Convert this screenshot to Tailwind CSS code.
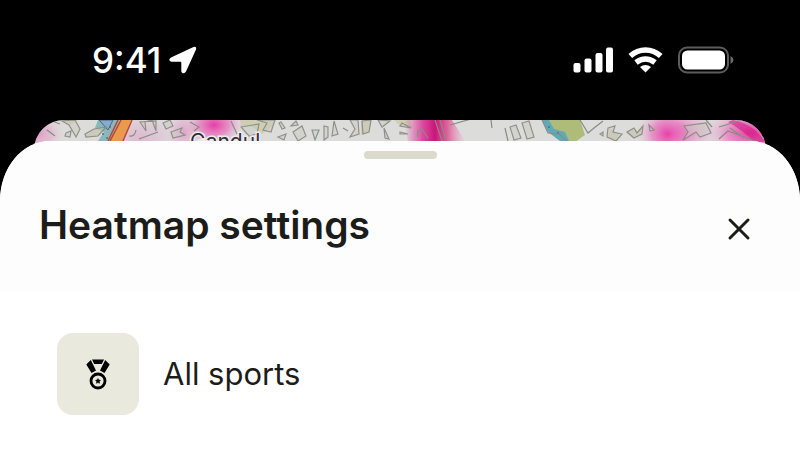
<!DOCTYPE html>
<html lang="en">

<head>
  <meta charset="UTF-8" />
  <meta name="viewport" content="width=device-width, initial-scale=1.0" />
  <title>Heatmap settings</title>
  <script src="https://cdn.jsdelivr.net/npm/@tailwindcss/browser@4"></script>
</head>

<body class="bg-black font-['Inter',sans-serif] text-[#1c1c1a] min-h-screen flex flex-col overflow-hidden">
  <!-- Status bar -->
  <header class="h-30 shrink-0 flex items-center justify-between pl-[92px] pr-[66px] text-white">
    <div class="flex items-center gap-2">
      <span class="text-[35px] leading-10 font-medium">9:41</span>
      <svg class="w-7 h-7" viewBox="0 0 28 28" fill="currentColor" aria-label="Location">
        <path d="M24.500 1Q28 .2 27 3.500L17 25.500Q15.500 28 13.500 27Q12.300 26.500 12.300 25V16.800Q12.300 15.800 11.300 15.800H2.500Q.2 15.500 .3 13.600Q.5 12.300 2 11.400Z" />
      </svg>
    </div>
    <div class="flex items-center gap-[15px]">
      <svg class="w-10 h-[26px]" viewBox="0 0 40 26" fill="currentColor" aria-label="Signal">
        <rect x="0.500" y="16" width="7" height="9.500" rx="2" />
        <rect x="11.500" y="11.500" width="7" height="14" rx="2" />
        <rect x="22.500" y="6" width="7" height="19.500" rx="2" />
        <rect x="33" y="0.500" width="7" height="25" rx="2" />
      </svg>
      <svg class="w-[35px] h-[26px]" viewBox="0 0 35 26" aria-label="Wi-Fi">
        <path d="M2.300 9Q9 3 17.500 3T32.700 9" fill="none" stroke="currentColor" stroke-width="5.400" />
        <path d="M8 15.500Q12.500 12 17.500 12T27 15.500" fill="none" stroke="currentColor" stroke-width="5.400" />
        <path d="M17.500 25.500L12 20Q17.500 16 23 20Z" fill="currentColor" />
      </svg>
      <svg class="w-14 h-[28px]" viewBox="0 0 56 28" aria-label="Battery">
        <rect x="1" y="1.500" width="49" height="25" rx="8" fill="none" stroke="#5c5c5c" stroke-width="2" />
        <rect x="4" y="4.500" width="43" height="19" rx="5.500" fill="currentColor" />
        <path d="M52.500 10Q55.500 11.500 55.500 14T52.500 18Z" fill="#6b6b6b" />
      </svg>
    </div>
  </header>

  <!-- Map peeking out behind the sheet -->
  <div class="h-[21px] shrink-0 px-[34px]">
    <div class="h-12 rounded-t-[30px] overflow-hidden bg-[#dcdcdb]">
      <svg class="w-full h-full" viewBox="34 120 732 48" preserveAspectRatio="xMidYMin slice">
        <defs>
          <radialGradient id="heat">
            <stop offset="0" stop-color="#e8209c" stop-opacity=".85" />
            <stop offset=".5" stop-color="#ec55b4" stop-opacity=".55" />
            <stop offset="1" stop-color="#f4b9dc" stop-opacity="0" />
          </radialGradient>
          <linearGradient id="heat-band">
            <stop offset="0" stop-color="#e52c9b" stop-opacity="0" />
            <stop offset=".3" stop-color="#dc2590" stop-opacity=".8" />
            <stop offset=".5" stop-color="#cb1479" />
            <stop offset=".7" stop-color="#d9508f" stop-opacity=".85" />
            <stop offset="1" stop-color="#f08cc5" stop-opacity="0" />
          </linearGradient>
        </defs>
        <!-- land and water -->
        <path d="M63 120H78L70 125ZM85 134L94 129L106 127L98 136L86 137ZM240 120H276L272 127L262 134L251 126H241ZM361 121L372 120L369 132L361 135ZM394 120H410L412 128L400 126Z" fill="#cfcdb4" />
        <path d="M542 120H580L585 135L575 142H562L550 129Z" fill="#aebb79" />
        <path d="M626 132L633 128L638 131L642 127V134L633 138ZM610 129L619 134L616 141L607 138Z" fill="#cdcab5" />
        <path d="M98 120H120L112 141H98L104 132L95 128Z" fill="#86b9bb" />
        <path d="M542 120H549L554 129L565 132L569 141H560L548 132Z" fill="#62a9b8" />
        <path d="M99 120L108 130L113 120Z" fill="#80add2" stroke="#50636b" />
        <g fill="#337c7c"><circle cx="103" cy="134" r="1" /><circle cx="110" cy="127" r="1" /><circle cx="107" cy="138" r="1" /><circle cx="549" cy="127" r="1" /><circle cx="558" cy="133" r="1" /></g>
        <!-- heat -->
        <ellipse cx="38" cy="134" rx="28" ry="20" fill="url(#heat)" opacity=".4" />
        <ellipse cx="140" cy="138" rx="45" ry="28" fill="url(#heat)" opacity=".22" />
        <ellipse cx="184" cy="132" rx="18" ry="22" fill="url(#heat)" opacity=".35" />
        <ellipse cx="214" cy="125" rx="30" ry="22" fill="url(#heat)" />
        <path d="M404 120H452L466 142H408Z" fill="url(#heat-band)" />
        <ellipse cx="668" cy="134" rx="32" ry="28" fill="url(#heat)" />
        <ellipse cx="691" cy="132" rx="28" ry="24" fill="url(#heat)" opacity=".35" />
        <ellipse cx="750" cy="133" rx="46" ry="26" fill="url(#heat)" />
        <path d="M733 120Q754 124 765 142H754Q744 131 728 122Z" fill="#d4127f" opacity=".55" />
        <!-- main road -->
        <path d="M121 120H131L123 141H110Z" fill="#e99a4d" />
        <path d="M121 120L110 141M132 120L123 141M118 120L108 141" fill="none" stroke="#b94832" stroke-width="1.500" />
        <!-- buildings -->
        <g fill="#c9c9c2" fill-opacity=".5" stroke="#83867e" stroke-width="1.200" stroke-opacity=".85">
          <path d="M62 121L69 125L76 137L80 129L75 120ZM66 133L71 131L70 137L65 136ZM85 134L94 129L106 127L98 136L86 137Z" />
          <path d="M140 122L146 131L145 122L152 120L156 131V121ZM163 123L166 129L173 126L170 120ZM171 132L182 128L180 132L185 135L173 138ZM241 127L259 124L257 134L249 136ZM257 120L267 123L263 130L271 132L275 120ZM281 122L285 128L282 129L279 123ZM291 126L296 121L298 125ZM293 132L302 126L306 136L298 141ZM312 130L319 130L315 140ZM324 126V140L328 137V127Z" />
          <path d="M350 120L355 129L350 137L359 134L358 120ZM362 121L363 134L369 132L371 120ZM378 120L382 127L390 121ZM384 128L389 139L385 138ZM400 132L408 134H400ZM402 123L411 128L400 126Z" />
          <path d="M510 127L516 125L521 138L514 140ZM522 123L529 121L534 137L527 139ZM608 128L615 126L613 132L622 134L616 141L607 137ZM627 132L634 128L637 133L643 126L642 134L634 138ZM600 134L603 132V136ZM683 140L688 132L684 126L706 123L711 133L700 137L696 132ZM649 125L654 130L650 131Z" />
          <path d="M334 121L338 134L332 136ZM278 137L286 134L284 140Z" />
        </g>
        <!-- streets -->
        <g fill="none" stroke="#898c82" stroke-width="1.200">
          <path d="M47 130L55 136M52 121L60 124M129 136Q135 137 136 130M139 139L158 132M190 122L199 127L194 131M231 121L237 134M343 128L348 131M418 137Q416 129 422 129L428 138M435 120L442 141M440 120L446 140M450 125L471 119M491 120L492 128M505 128L508 141M542 120L548 133L559 134L568 142M580 120L588 133L594 128L603 121M706 120L712 127M719 127L739 121M719 139L728 131L758 142M730 128L744 138" />
        </g>
        <text x="190" y="149" font-size="21" fill="#303038" stroke="#f0e9ed" stroke-width="3" paint-order="stroke">Gandul</text>
      </svg>
    </div>
  </div>

  <!-- Bottom sheet -->
  <main class="relative flex-1 bg-white rounded-t-[50px_60px] overflow-hidden">
    <div class="bg-[#fdfdfd] h-[151px] pt-[10px]">
      <div class="w-[73px] h-2 mx-auto rounded-full bg-[#dcdacd]"></div>
      <div class="flex items-center justify-between mt-10 px-[39px]">
        <h1 class="text-[39px] leading-12 font-semibold">Heatmap settings</h1>
        <button type="button" aria-label="Close" class="size-11 mt-2 flex items-center justify-center">
          <svg class="size-6" viewBox="0 0 24 24" fill="none" stroke="currentColor" stroke-width="3" stroke-linecap="round">
            <path d="M3 3L21 21M21 3L3 21" />
          </svg>
        </button>
      </div>
    </div>
    <button type="button" class="w-full flex items-center gap-6 px-[57px] py-[41px] text-left">
      <span class="size-[82px] rounded-2xl bg-[#eae9dd] flex items-center justify-center text-black">
        <svg class="w-6 h-[31px]" viewBox="0 0 24 31" fill="currentColor">
          <path d="M6 0.500H18L15.800 5H8.200ZM4.800 1L10 11.500L5.500 14L0.300 5.500ZM19.200 1L14 11.500L18.500 14L23.700 5.500Z" />
          <circle cx="12" cy="22" r="7" fill="none" stroke="currentColor" stroke-width="2.800" />
          <path d="M12 19.500L12.900 21L14.500 21.300L13.400 22.600L13.600 24.300L12 23.600L10.400 24.300L10.600 22.600L9.500 21.300L11.100 21Z" stroke="currentColor" stroke-width=".5" />
        </svg>
      </span>
      <span class="text-[31px] leading-10">All sports</span>
    </button>
  </main>
</body>

</html>
